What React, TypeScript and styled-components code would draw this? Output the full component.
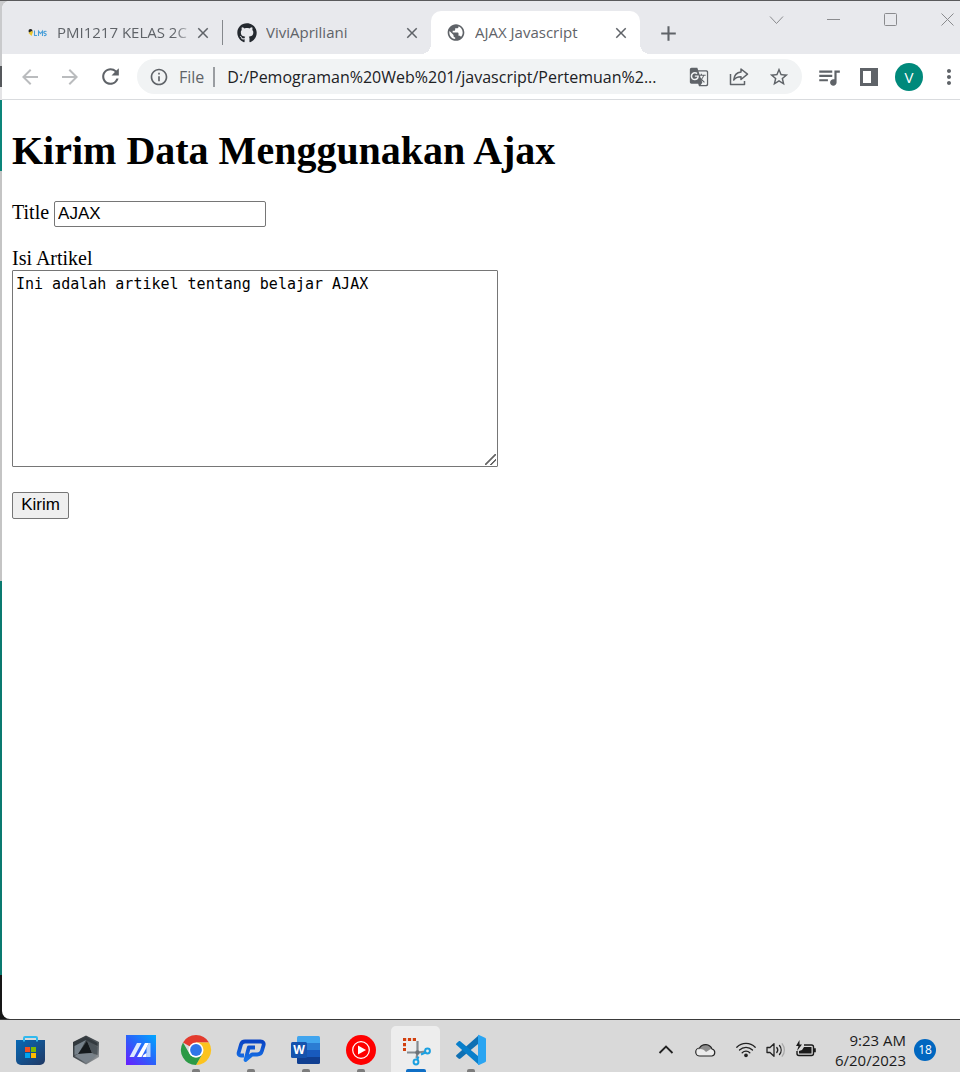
import React from "react";
import styled, { createGlobalStyle, css } from "styled-components";
import {
  MdArrowBack,
  MdArrowForward,
  MdRefresh,
  MdInfoOutline,
  MdStarBorder,
  MdGTranslate,
  MdQueueMusic,
  MdMoreVert,
  MdPublic,
  MdClose,
  MdAdd,
} from "react-icons/md";
import { FaGithub } from "react-icons/fa";

const GlobalStyle = createGlobalStyle`
  * { box-sizing: border-box; }
  body { margin: 0; background: #d9d9d9; }
  button { font: inherit; }
`;

const uiFont = `"Segoe UI", "Open Sans", "Noto Sans", sans-serif`;

const Screen = styled.div`
  display: flex;
  flex-direction: column;
  min-height: 100vh;
  overflow: hidden;
  font-family: ${uiFont};
`;

const Desktop = styled.div`
  flex: 1;
  display: flex;
  padding: 1px 0 0 2px;
  background:
    linear-gradient(#5a5a5c, #5a5a5c) 0 0 / 100% 1px no-repeat,
    linear-gradient(
      #c9cacc 66px, #55585c 66px, #55585c 87px, #e4e4e6 87px, #e4e4e6 100px,
      #0c857a 100px, #0c857a 171px, #c4c4c4 171px, #c4c4c4 581px,
      #0a7a70 581px, #0a7a70 975px, #161616 975px
    );
`;

const BrowserWindow = styled.main`
  flex: 1;
  min-width: 0;
  display: flex;
  flex-direction: column;
  overflow: hidden;
  border-radius: 8px 0 0 8px;
  background: #fff;
`;

const TabStrip = styled.div`
  display: flex;
  height: 53px;
  padding: 10px 4px 0 11px;
  background: #e8e9ed;
`;

const Tab = styled.div<{ $active?: boolean; $divider?: boolean }>`
  position: relative;
  display: flex;
  align-items: center;
  gap: 4px;
  width: 209px;
  flex-shrink: 0;
  padding: 0 9px 0 15px;
  color: #5f6368;

  ${(p) =>
    p.$divider &&
    css`
      &::after {
        content: "";
        position: absolute;
        right: -1px;
        width: 1px;
        height: 25px;
        background: #85888c;
      }
    `}

  ${(p) =>
    p.$active &&
    css`
      background: #fff;
      border-radius: 10px 10px 0 0;
      &::before,
      &::after {
        content: "";
        position: absolute;
        bottom: 0;
        width: 10px;
        height: 10px;
      }
      &::before {
        left: -10px;
        background: radial-gradient(circle at 0 0, #e8e9ed 10px, #fff 10px);
      }
      &::after {
        right: -10px;
        background: radial-gradient(circle at 100% 0, #e8e9ed 10px, #fff 10px);
      }
    `}
`;

const TabIcon = styled.span`
  display: flex;
  justify-content: center;
  width: 20px;
  flex-shrink: 0;
  margin-right: 5px;
`;

const TabTitle = styled.span<{ $fade?: boolean }>`
  flex: 1;
  overflow: hidden;
  padding-bottom: 1px;
  white-space: nowrap;
  font-size: 15px;
  line-height: 20px;
  ${(p) => p.$fade && css`mask-image: linear-gradient(90deg, #000 88%, rgba(0, 0, 0, 0.3));`}
`;

const IconButton = styled.button<{ $size?: number; $color?: string }>`
  display: flex;
  align-items: center;
  justify-content: center;
  flex-shrink: 0;
  width: ${(p) => p.$size ?? 28}px;
  height: ${(p) => p.$size ?? 28}px;
  padding: 0;
  border: 0;
  background: none;
  color: ${(p) => p.$color ?? "#5f6368"};
`;

const NewTab = styled(IconButton)`
  margin: 8px 0 0 14px;
`;

const WindowControls = styled.div`
  display: flex;
  gap: 40px;
  margin-left: auto;
`;

const Toolbar = styled.div`
  display: flex;
  align-items: center;
  gap: 12px;
  height: 46px;
  padding-left: 14px;
  border-bottom: 1px solid #d9dbde;
`;

const AddressBar = styled.div`
  flex: 1;
  min-width: 0;
  display: flex;
  align-items: center;
  gap: 12px;
  height: 35px;
  margin: 0 1px;
  padding: 0 9px 0 8px;
  border-radius: 18px;
  background: #f1f3f4;
  font-size: 16px;
  line-height: 24px;
`;

const Scheme = styled.span`
  margin-left: -6px;
  padding-right: 9px;
  border-right: 2px solid #9a9da1;
  line-height: 20px;
  color: #5f6368;
`;

const AddressInput = styled.input`
  flex: 1;
  min-width: 0;
  padding: 0;
  border: 0;
  outline: 0;
  background: none;
  color: #202124;
  font: 16px/24px ${uiFont};
  text-overflow: ellipsis;
`;

const ToolbarActions = styled.div`
  display: flex;
  gap: 12px;
  margin-right: -3px;
`;

const Avatar = styled(IconButton)`
  border-radius: 50%;
  background: #00897b;
  color: #fff;
  font-size: 15px;
`;

const Page = styled.section`
  flex: 1;
  padding: 28px 10px;
  color: #000;
  font: 20px/23px "Liberation Serif", "Times New Roman", serif;
`;

const Heading = styled.h1`
  margin: 0 0 27px;
  font-size: 40px;
  line-height: 46px;
`;

const TitleField = styled.div`
  display: flex;
  gap: 5px;
  margin-bottom: 20px;
`;

const TextInput = styled.input`
  width: 212px;
  height: 26px;
  padding: 0 3px 1px;
  border: 1px solid #767676;
  border-radius: 2px;
  font: 17px/20px "Liberation Sans", Arial, sans-serif;
`;

const ArticleField = styled.div`
  display: flex;
  flex-direction: column;
  align-items: flex-start;
  margin-bottom: 25px;
`;

const ArticleInput = styled.textarea`
  width: 486px;
  max-width: 100%;
  height: 197px;
  padding: 3px;
  border: 1px solid #767676;
  border-radius: 1px;
  font: 15px/20px "DejaVu Sans Mono", monospace;

  &::-webkit-resizer {
    background: linear-gradient(
        135deg,
        transparent 44%,
        #666 46%,
        #666 54%,
        transparent 56%,
        transparent 70%,
        #666 72%,
        #666 80%,
        transparent 82%
      )
      3px 3px / 11px 11px no-repeat;
  }
`;

const SubmitButton = styled.button`
  display: block;
  width: 57px;
  height: 27px;
  padding: 0 0 2px;
  border: 1px solid #767676;
  border-radius: 2px;
  background: #efefef;
  color: #000;
  font: 17px/20px "Liberation Sans", Arial, sans-serif;
`;

const Taskbar = styled.footer`
  display: flex;
  align-items: center;
  justify-content: space-between;
  height: 53px;
  padding: 0 24px 0 6px;
  border-top: 1px solid #3a3a3a;
  background: #d9d9d9;
`;

const AppList = styled.nav`
  display: flex;
  align-self: stretch;
  gap: 6px;
  padding-top: 6px;
`;

const AppButton = styled.button<{ $running?: boolean; $active?: boolean }>`
  position: relative;
  display: flex;
  justify-content: center;
  width: 49px;
  padding: 8px 0 0;
  border: 0;
  border-radius: 5px 5px 0 0;
  background: ${(p) => (p.$active ? "#ededed" : "none")};

  ${(p) =>
    p.$running &&
    css`
      &::after {
        content: "";
        position: absolute;
        bottom: 0;
        width: ${p.$active ? 20 : 8}px;
        height: 3px;
        border-radius: 2px 2px 0 0;
        background: ${p.$active ? "#0f6fc6" : "#7c7c7c"};
      }
    `}
`;

const Tray = styled.div`
  display: flex;
  align-items: center;
  gap: 8px;
  padding-top: 7px;
`;

const TrayGroup = styled.div<{ $gap: number; $end?: number }>`
  display: flex;
  gap: ${(p) => p.$gap}px;
  margin-right: ${(p) => p.$end ?? 0}px;
`;

const Clock = styled.time`
  width: 81px;
  text-align: right;
  font-size: 15px;
  line-height: 20px;
  color: #1b1b1b;
`;

const Badge = styled.span`
  width: 22px;
  height: 22px;
  border-radius: 50%;
  background: #0067c0;
  color: #fff;
  font-size: 12px;
  line-height: 22px;
  text-align: center;
`;

const LmsIcon = () => (
  <svg width="20" height="12" viewBox="0 0 20 12">
    <circle cx="2.500" cy="4" r="2" fill="#222" />
    <path d="M.5 6l3-2 1.500 1-1.500 4-2-2z" fill="#e8c52c" />
    <path d="M6.500 3.500v5h2.500M10.500 9V4l2 2.500 2-2.500v5M18.500 4.500c-3-1-3.500 1.500-1.500 2s1.500 2.500-1 2" fill="none" stroke="#4a9fd8" strokeWidth="1.100" />
  </svg>
);

const ShareIcon = () => (
  <svg width="20" height="20" viewBox="0 0 20 20" fill="none" stroke="#5f6368" strokeWidth="1.500" strokeLinejoin="round">
    <path d="M1.500 7v10.500h14V14" />
    <path d="M12 2l6.500 5.200L12 12.500V9.700c-3.600 0-5.800 1-7.300 3.300.4-4.200 2.700-7.500 7.300-8z" />
  </svg>
);

const SidePanelIcon = () => (
  <svg width="18" height="18" viewBox="0 0 18 18">
    <path d="M0 0h18v18H0zM3 3v12h8V3z" fill="#5f6368" fillRule="evenodd" />
  </svg>
);

const controlPaths = {
  search: "M2 5.500l6.500 7L15 5.500",
  minimize: "M2 8.500h13",
  maximize: "M3.500 2.500h10a1 1 0 0 1 1 1v10a1 1 0 0 1-1 1h-10a1 1 0 0 1-1-1v-10a1 1 0 0 1 1-1z",
  close: "M2.500 2.500l12 12M14.500 2.500l-12 12",
};

const ControlIcon = ({ name }: { name: keyof typeof controlPaths }) => (
  <svg width="17" height="17" viewBox="0 0 17 17" fill="none" stroke="#8a8b8e">
    <path d={controlPaths[name]} />
  </svg>
);

const StoreIcon = () => (
  <svg width="32" height="32" viewBox="0 0 32 32">
    <defs>
      <linearGradient id="store" x1="0" y1="0" x2="1" y2="1">
        <stop stopColor="#0869b5" />
        <stop offset="1" stopColor="#203864" />
      </linearGradient>
    </defs>
    <path d="M1 6h29v20a5 5 0 0 1-5 5H6a5 5 0 0 1-5-5z" fill="url(#store)" />
    <path d="M9 7.500V4a1 1 0 0 1 1-1h11a1 1 0 0 1 1 1v3.500" fill="none" stroke="#30b9ee" strokeWidth="2" />
    <path d="M10 13h5v5h-5z" fill="#f25022" />
    <path d="M16 13h5v5h-5z" fill="#7fba00" />
    <path d="M10 19h5v5h-5z" fill="#00a4ef" />
    <path d="M16 19h5v5h-5z" fill="#ffb900" />
  </svg>
);

const ArmouryIcon = () => (
  <svg width="32" height="32" viewBox="0 0 32 32">
    <defs>
      <linearGradient id="hex" x1="0" y1="0" x2="1" y2="1">
        <stop stopColor="#2a2f33" />
        <stop offset="0.6" stopColor="#52585d" />
        <stop offset="1" stopColor="#b4b7ba" />
      </linearGradient>
    </defs>
    <path d="M16 1.500L29 8v15l-13 7.500L3 23V8z" fill="url(#hex)" />
    <path d="M16 3l11.500 6v3L16 6 4.500 12V9z" fill="#333a3f" />
    <path d="M16 6L4.500 12v9l4-1z" fill="#76818a" />
    <path d="M17 7L8 20l14-1z" fill="#15191c" />
    <path d="M17 7l10.500 6v8L22 19z" fill="#4d555b" />
    <path d="M4.500 22L8 20l14-1 4 3-10 7z" fill="#79828a" />
  </svg>
);

const MyAsusIcon = () => (
  <svg width="32" height="32" viewBox="0 0 32 32">
    <defs>
      <linearGradient id="asus" x1="0" y1="1" x2="1" y2="0">
        <stop stopColor="#6a1cff" />
        <stop offset="0.5" stopColor="#2a62fa" />
        <stop offset="1" stopColor="#00a8ff" />
      </linearGradient>
    </defs>
    <path d="M1 1h30v30H1z" fill="url(#asus)" />
    <path d="M12 9h4.500L9 23H4.500z" fill="#dce9ff" />
    <path d="M20 9h4L16.500 23H12z" fill="#fff" />
    <path d="M21.500 13.500L24 9h1.500v14h-4z" fill="#b9d4fc" />
    <path d="M18.500 21l3-2v4h-4z" fill="#fff" />
  </svg>
);

const ChromeIcon = () => (
  <svg width="32" height="32" viewBox="0 0 32 32">
    <path d="M16 16L3 8.500A15 15 0 0 1 29 8.500H16z" fill="#e33b2e" />
    <path d="M16 8.500h13A15 15 0 0 1 16 31l6.500-11.300z" fill="#fcc31e" />
    <path d="M3 8.500l6.500 11.300A7.500 7.500 0 0 0 22.500 19.800L16 31A15 15 0 0 1 3 8.500z" fill="#2c9a46" />
    <circle cx="16" cy="16" r="7.500" fill="#fff" />
    <circle cx="16" cy="16" r="5.900" fill="#2f76e8" />
  </svg>
);

const PcAppIcon = () => (
  <svg width="32" height="32" viewBox="0 0 32 32">
    <defs>
      <linearGradient id="pc" x1="0" y1="0" x2="0" y2="1">
        <stop stopColor="#0a44c4" />
        <stop offset="1" stopColor="#1673e8" />
      </linearGradient>
    </defs>
    <path
      d="M9 21.500H6c-2 0-2.800-1.300-2.300-3l2.300-8c.6-2 2-3 4-3h15.500c2.700 0 3.700 1.500 3 4l-1.600 5.500c-.7 2.500-2 3.500-4.700 3.500H17l-6.500 5.500 3.300-12.500H20"
      fill="none"
      stroke="url(#pc)"
      strokeWidth="3.800"
      strokeLinejoin="round"
    />
  </svg>
);

const WordIcon = () => (
  <svg width="32" height="32" viewBox="0 0 32 32">
    <path d="M7 3.500A1.500 1.500 0 0 1 8.500 2h20A1.500 1.500 0 0 1 30 3.500V9H7z" fill="#41a5ee" />
    <path d="M7 9h23v7H7z" fill="#2b7cd3" />
    <path d="M7 16h23v7H7z" fill="#185abd" />
    <path d="M7 23h23v5.500a1.500 1.500 0 0 1-1.500 1.500h-20A1.500 1.500 0 0 1 7 28.500z" fill="#103f91" />
    <rect x="1" y="8" width="16" height="16" rx="1.500" fill="#1553ad" />
    <text x="9" y="20" textAnchor="middle" fontFamily="Open Sans, sans-serif" fontSize="12" fontWeight="700" fill="#fff">
      W
    </text>
  </svg>
);

const MusicIcon = () => (
  <svg width="32" height="32" viewBox="0 0 32 32">
    <circle cx="16" cy="16" r="15" fill="#f00" />
    <circle cx="16" cy="16" r="8.300" fill="none" stroke="#fff" strokeWidth="1.200" />
    <path d="M13 11.500l8 4.500-8 4.500z" fill="#fff" />
  </svg>
);

const SnippingIcon = () => (
  <svg width="32" height="32" viewBox="0 0 32 32" fill="none">
    <path d="M3 5.500h13M4.500 9v8" stroke="#d2400e" strokeWidth="3" strokeDasharray="3.200 1.700" />
    <path d="M17.500 7v12l-1 5M7 18.500h11l7-1" stroke="#858b90" strokeWidth="2.200" />
    <circle cx="17.500" cy="18.500" r="2.200" fill="#6c7277" />
    <circle cx="16" cy="28" r="2.400" stroke="#1ba0e1" strokeWidth="2" />
    <circle cx="27.500" cy="17" r="2.400" stroke="#1ba0e1" strokeWidth="2" />
    <path d="M21 20.500l4.500-2M18.500 22.500l-1.500 3.500" stroke="#1ba0e1" strokeWidth="2" />
  </svg>
);

const CodeIcon = () => (
  <svg width="32" height="32" viewBox="0 0 32 32">
    <path d="M24 1l-1 9L5.500 24.500c-.7.600-1.300.5-2 0l-2-1.700a1.200 1.200 0 0 1 0-1.900z" fill="#0f70b3" />
    <path d="M24 31l-1-9L5.500 7.500c-.7-.6-1.300-.5-2 0l-2 1.700a1.200 1.200 0 0 0 0 1.900z" fill="#087fcb" />
    <path d="M24 1l6 2.800a1.600 1.600 0 0 1 1 1.500v21.400a1.600 1.600 0 0 1-1 1.500L24 31c-1 .5-1-1-1-1.500v-27C23 1.500 23 .5 24 1z" fill="#2aa5f2" />
  </svg>
);

const ChevronIcon = () => (
  <svg width="16" height="22" viewBox="0 0 16 22" fill="none" stroke="#222" strokeWidth="1.800">
    <path d="M1.500 14L8 7.500l6.500 6.500" />
  </svg>
);

const CloudIcon = () => (
  <svg width="22" height="22" viewBox="0 0 22 22">
    <path d="M5 17a4 4 0 0 1-.500-8 7 7 0 0 1 12.500 1 3.600 3.600 0 0 1 0 7z" fill="#ececec" />
    <path d="M3 10.500C6 9 9 10.500 11 13l4-2.500 2-1a7 7 0 0 0-12.500-.500z" fill="#8d8d8d" />
    <path d="M5 17a4 4 0 0 1-.500-8 7 7 0 0 1 12.500 1 3.600 3.600 0 0 1 0 7z" fill="none" stroke="#242424" strokeWidth="1.200" />
  </svg>
);

const WifiIcon = () => (
  <svg width="22" height="22" viewBox="0 0 22 22" fill="none" stroke="#222" strokeWidth="1.300" strokeLinecap="round">
    <path d="M1.800 8.200a13 13 0 0 1 18.400 0M4.500 11a9.200 9.200 0 0 1 13 0M7.200 13.700a5.400 5.400 0 0 1 7.600 0" />
    <circle cx="11" cy="16.300" r="1.200" fill="#222" />
  </svg>
);

const SpeakerIcon = () => (
  <svg width="22" height="22" viewBox="0 0 22 22" fill="none" stroke="#222" strokeWidth="1.300" strokeLinejoin="round" strokeLinecap="round">
    <path d="M2 8.500h3l4-3.800v12.600l-4-3.800H2z" />
    <path d="M11.800 8.500a4 4 0 0 1 0 5M14.500 6.500a7 7 0 0 1 0 9" />
    <path d="M17.200 4.800a10 10 0 0 1 0 12.400" stroke="#aaa" />
  </svg>
);

const BatteryIcon = () => (
  <svg width="22" height="22" viewBox="0 0 22 22">
    <path d="M9 6h7.500a2 2 0 0 1 2 2v6.500a2 2 0 0 1-2 2H4a2 2 0 0 1-2-2V12" fill="none" stroke="#1b1b1b" strokeWidth="1.400" />
    <path d="M9 8h7.500v6.500H4V12l3-1z" fill="#1b1b1b" />
    <path d="M19 9.300h1.800v4H19z" fill="#1b1b1b" />
    <path d="M4.500 1L1 7h2.500L2 12l5-6.500H4.500z" fill="#1b1b1b" />
  </svg>
);

const tabs = [
  { title: "PMI1217 KELAS 2C", icon: <LmsIcon />, divider: true, fade: true },
  { title: "ViviApriliani", icon: <FaGithub size={20} color="#24292f" /> },
  { title: "AJAX Javascript", icon: <MdPublic size={21} />, active: true },
];

const apps = [
  { name: "Microsoft Store", icon: <StoreIcon /> },
  { name: "Armoury Crate", icon: <ArmouryIcon /> },
  { name: "MyASUS", icon: <MyAsusIcon /> },
  { name: "Google Chrome", icon: <ChromeIcon />, running: true },
  { name: "PC client", icon: <PcAppIcon />, running: true },
  { name: "Word", icon: <WordIcon />, running: true },
  { name: "YouTube Music", icon: <MusicIcon />, running: true },
  { name: "Snipping Tool", icon: <SnippingIcon />, running: true, active: true },
  { name: "Visual Studio Code", icon: <CodeIcon />, running: true },
];

export default function App() {
  return (
    <Screen>
      <GlobalStyle />
      <Desktop>
        <BrowserWindow>
          <TabStrip>
            {tabs.map((tab) => (
              <Tab key={tab.title} $active={tab.active} $divider={tab.divider}>
                <TabIcon>{tab.icon}</TabIcon>
                <TabTitle $fade={tab.fade}>{tab.title}</TabTitle>
                <IconButton $size={20} aria-label={`Close ${tab.title}`}>
                  <MdClose size={18} />
                </IconButton>
              </Tab>
            ))}
            <NewTab aria-label="New tab">
              <MdAdd size={25} />
            </NewTab>
            <WindowControls>
              <IconButton $size={17} aria-label="Search tabs"><ControlIcon name="search" /></IconButton>
              <IconButton $size={17} aria-label="Minimize"><ControlIcon name="minimize" /></IconButton>
              <IconButton $size={17} aria-label="Maximize"><ControlIcon name="maximize" /></IconButton>
              <IconButton $size={17} aria-label="Close window"><ControlIcon name="close" /></IconButton>
            </WindowControls>
          </TabStrip>

          <Toolbar>
            <IconButton $color="#babcbe" aria-label="Back"><MdArrowBack size={24} /></IconButton>
            <IconButton $color="#babcbe" aria-label="Forward"><MdArrowForward size={24} /></IconButton>
            <IconButton aria-label="Reload"><MdRefresh size={25} /></IconButton>
            <AddressBar>
              <IconButton aria-label="Site information"><MdInfoOutline size={20} /></IconButton>
              <Scheme>File</Scheme>
              <AddressInput
                aria-label="Address"
                readOnly
                value="D:/Pemograman%20Web%201/javascript/Pertemuan%2..."
              />
              <IconButton aria-label="Translate"><MdGTranslate size={20} /></IconButton>
              <IconButton aria-label="Share"><ShareIcon /></IconButton>
              <IconButton aria-label="Bookmark"><MdStarBorder size={22} /></IconButton>
            </AddressBar>
            <ToolbarActions>
              <IconButton aria-label="Media controls"><MdQueueMusic size={26} /></IconButton>
              <IconButton aria-label="Side panel"><SidePanelIcon /></IconButton>
              <Avatar aria-label="Profile">V</Avatar>
              <IconButton aria-label="Menu"><MdMoreVert size={24} /></IconButton>
            </ToolbarActions>
          </Toolbar>

          <Page>
            <Heading>Kirim Data Menggunakan Ajax</Heading>
            <form onSubmit={(e) => e.preventDefault()}>
              <TitleField>
                <label htmlFor="title">Title</label>
                <TextInput id="title" defaultValue="AJAX" />
              </TitleField>
              <ArticleField>
                <label htmlFor="article">Isi Artikel</label>
                <ArticleInput id="article" spellCheck={false} defaultValue="Ini adalah artikel tentang belajar AJAX" />
              </ArticleField>
              <SubmitButton type="submit">Kirim</SubmitButton>
            </form>
          </Page>
        </BrowserWindow>
      </Desktop>

      <Taskbar>
        <AppList>
          {apps.map((app) => (
            <AppButton key={app.name} aria-label={app.name} $running={app.running} $active={app.active}>
              {app.icon}
            </AppButton>
          ))}
        </AppList>
        <Tray>
          <TrayGroup $gap={21} $end={10}>
            <ChevronIcon />
            <CloudIcon />
          </TrayGroup>
          <TrayGroup $gap={8}>
            <WifiIcon />
            <SpeakerIcon />
            <BatteryIcon />
          </TrayGroup>
          <Clock>
            9:23 AM
            <br />
            6/20/2023
          </Clock>
          <Badge>18</Badge>
        </Tray>
      </Taskbar>
    </Screen>
  );
}
